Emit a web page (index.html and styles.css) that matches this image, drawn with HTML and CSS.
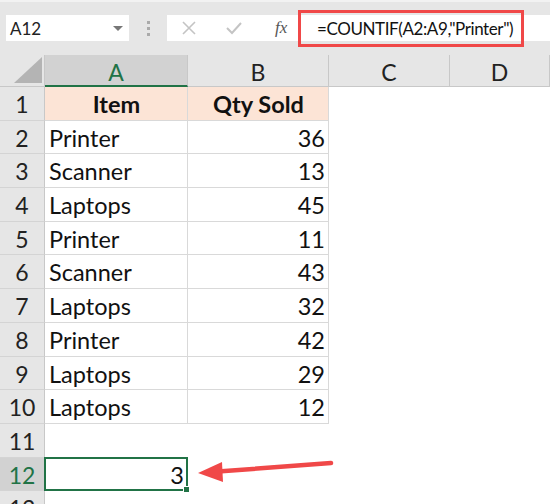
FILE: index.html
```html
<!DOCTYPE html>
<html lang="en">
<head>
    <meta charset="UTF-8">
    <title>COUNTIF</title>
    <link rel="stylesheet" href="styles.css">
</head>
<body>
    <div class="sheet">
        <div class="topbar">
            <div class="namebox">
                <span>A12</span>
                <span class="caret"></span>
            </div>
            <div class="dots">
                <i></i><i></i><i></i>
            </div>
            <div class="formulabar">
                <svg class="fbtn" width="16" height="16" viewBox="0 0 16 16">
                    <path d="M2 2 L14 14 M14 2 L2 14" stroke="#c4c4c4" stroke-width="1.6" fill="none"/>
                </svg>
                <svg class="fbtn" width="18" height="16" viewBox="0 0 18 16">
                    <path d="M2 8 L7 13 L16 3" stroke="#c4c4c4" stroke-width="2" fill="none"/>
                </svg>
                <span class="fx">fx</span>
                <span class="formula">=COUNTIF(A2:A9,"Printer")</span>
            </div>
        </div>

        <div class="grid" id="grid">
            <div class="corner"><span class="tri"></span></div>
            <div class="colhead active">A</div>
            <div class="colhead">B</div>
            <div class="colhead">C</div>
            <div class="colhead">D</div>
        </div>

        <svg class="arrow" width="550" height="504" viewBox="0 0 550 504">
            <path d="M331 463 L218 471.5" stroke="#f04848" stroke-width="4.5" stroke-linecap="round" fill="none"/>
            <path d="M198 473 L222 462 L223 482 Z" fill="#f04848"/>
        </svg>
    </div>

    <script>
    // rows of the sheet
    var data = [
        ['Item', 'Qty Sold'],
        ['Printer', 36],
        ['Scanner', 13],
        ['Laptops', 45],
        ['Printer', 11],
        ['Scanner', 43],
        ['Laptops', 32],
        ['Printer', 42],
        ['Laptops', 29],
        ['Laptops', 12]
    ];

    var grid = document.getElementById('grid');

    function cell(cls, text) {
        var d = document.createElement('div');
        d.className = cls;
        if (text !== undefined) d.textContent = text;
        grid.appendChild(d);
        return d;
    }

    for (var r = 1; r <= 13; r++) {
        cell(r === 12 ? 'rowhead active' : 'rowhead', r);
        var row = data[r - 1];
        if (row && r === 1) {
            cell('c head', row[0]);
            cell('c head', row[1]);
        } else if (row) {
            cell('c', row[0]);
            cell('c num', row[1]);
        } else if (r === 12) {
            cell('c num selected', 3);
            cell('e');
        } else {
            cell('e');
            cell('e');
        }
        cell('e');
        cell('e');
    }
    </script>
</body>
</html>
```

FILE: styles.css
```css
body {
    margin: 0;
    font-family: Lato, "Open Sans", sans-serif;
    background: #fff;
}

.sheet {
    position: relative;
    width: 550px;
    height: 504px;
    overflow: hidden;
}

.topbar {
    display: flex;
    align-items: center;
    height: 55px;
    padding-bottom: 1px;
    background: #e6e6e6;
    border-top: 2px solid #f2f2f2;
    box-sizing: border-box;
}

.namebox {
    display: flex;
    align-items: center;
    justify-content: space-between;
    width: 123px;
    height: 26px;
    margin-left: 6px;
    padding: 0 6px 0 4px;
    box-sizing: border-box;
    background: #fff;
    font-size: 17px;
    color: #222;
}

.caret {
    width: 0;
    height: 0;
    border-left: 5px solid transparent;
    border-right: 5px solid transparent;
    border-top: 5px solid #777;
}

.dots {
    display: flex;
    flex-direction: column;
    gap: 3px;
    width: 38px;
    align-items: center;
}

.dots i {
    width: 3px;
    height: 3px;
    background: #aaa;
}

.formulabar {
    display: flex;
    align-items: center;
    flex: 1;
    height: 26px;
    background: #fff;
}

.fbtn {
    margin-left: 14px;
    margin-right: 14px;
}

.fx {
    font-family: "Liberation Serif", serif;
    font-style: italic;
    font-size: 17px;
    color: #555;
    margin-left: 18px;
    width: 23px;
}

.formula {
    box-sizing: border-box;
    height: 37px;
    width: 226px;
    padding-left: 16px;
    border: 3px solid #f04848;
    font-size: 17px;
    letter-spacing: -0.4px;
    line-height: 31px;
    color: #111;
    white-space: nowrap;
}

.grid {
    display: grid;
    grid-template-columns: 45px 143px 141px 121px 100px;
    grid-template-rows: 32px repeat(13, 33.7px);
}

.corner {
    position: relative;
    background: #e6e6e6;
    border-right: 1px solid #c8c8c8;
    border-bottom: 1px solid #c8c8c8;
}

.tri {
    position: absolute;
    right: 2px;
    bottom: 3px;
    width: 0;
    height: 0;
    border-left: 28px solid transparent;
    border-bottom: 26px solid #b4b4b4;
}

.colhead {
    background: #e6e6e6;
    border-right: 1px solid #c8c8c8;
    border-bottom: 1px solid #c8c8c8;
    text-align: center;
    font-size: 23px;
    line-height: 34px;
    color: #222;
}

.colhead.active {
    background: #d2d2d2;
    color: #217346;
    border-bottom: 2px solid #217346;
}

.rowhead {
    background: #e6e6e6;
    border-right: 1px solid #c8c8c8;
    border-bottom: 1px solid #d4d4d4;
    text-align: center;
    font-size: 23px;
    line-height: 34px;
    color: #222;
}

.rowhead.active {
    background: #d2d2d2;
    color: #217346;
}

.c {
    border-right: 1px solid #d9d9d9;
    border-bottom: 1px solid #d9d9d9;
    font-size: 23.5px;
    line-height: 34px;
    padding: 0 3px 0 4px;
    color: #111;
    white-space: nowrap;
}

.head {
    background: #fce4d6;
    font-weight: bold;
    text-align: center;
}

.num {
    text-align: right;
}

.selected {
    position: relative;
    border: 2px solid #217346;
    margin: -1px 0 0 -1px;
    padding-right: 2px;
    line-height: 32px;
}

.selected::after {
    content: "";
    position: absolute;
    right: -4px;
    bottom: -4px;
    width: 5px;
    height: 5px;
    background: #217346;
    border: 1px solid #fff;
}

.e {
    background: #fff;
}

.arrow {
    position: absolute;
    left: 0;
    top: 0;
    pointer-events: none;
}
```
